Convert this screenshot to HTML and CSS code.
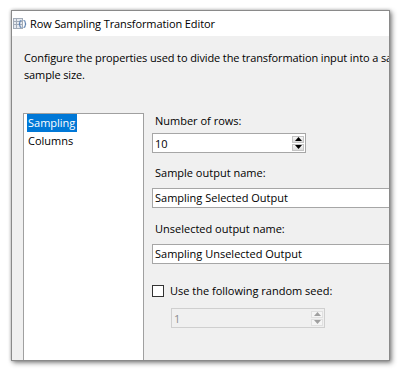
FILE: index.html
```html
<!DOCTYPE html>
<html>
<head>
<meta charset="utf-8">
<link rel="stylesheet" href="styles.css">
</head>
<body>
<div class="window">
  <div class="titlebar">
    <svg class="appicon" width="14" height="13" viewBox="0 0 14 13">
      <rect x="0.5" y="1.5" width="9" height="10" fill="#e6eaf0" stroke="#a3acb8"/>
      <line x1="0.5" y1="4.5" x2="9.5" y2="4.5" stroke="#a3acb8"/>
      <line x1="0.5" y1="7.5" x2="9.5" y2="7.5" stroke="#a3acb8"/>
      <line x1="3.5" y1="1.5" x2="3.5" y2="11.5" stroke="#a3acb8"/>
      <path d="M8.5 3.5 Q6.8 3.5 6.8 5.2 L6.8 6 Q6.8 7 5.8 7 Q6.8 7 6.8 8 L6.8 8.8 Q6.8 10.5 8.5 10.5" fill="none" stroke="#5b7fae" stroke-width="1.1"/>
      <path d="M10.5 3.5 Q12.2 3.5 12.2 5.2 L12.2 6 Q12.2 7 13.2 7 Q12.2 7 12.2 8 L12.2 8.8 Q12.2 10.5 10.5 10.5" fill="none" stroke="#5b7fae" stroke-width="1.1"/>
    </svg>
    <span class="title">Row Sampling Transformation Editor</span>
  </div>
  <div class="content">
    <p class="desc">Configure the properties used to divide the transformation input into a sample based on a<br>sample size.</p>
    <div class="main">
      <div class="listbox">
        <div class="item selected">Sampling</div>
        <div class="item">Columns</div>
      </div>
      <div class="panel">
        <label class="lbl lbl-rows">Number of rows:</label>
        <div class="spin spin-rows">
          <span class="val">10</span>
          <div class="btns">
            <div class="btn"><svg width="7" height="4" viewBox="0 0 7 4"><path d="M3.5 0 L7 4 L0 4 Z" fill="#000"/></svg></div>
            <div class="btn"><svg width="7" height="4" viewBox="0 0 7 4"><path d="M0 0 L7 0 L3.5 4 Z" fill="#000"/></svg></div>
          </div>
        </div>
        <label class="lbl lbl-sample">Sample output name:</label>
        <div class="textbox">Sampling Selected Output</div>
        <label class="lbl lbl-unsel">Unselected output name:</label>
        <div class="textbox">Sampling Unselected Output</div>
        <div class="check">
          <span class="box"></span>
          <span>Use the following random seed:</span>
        </div>
        <div class="spin disabled">
          <span class="val">1</span>
          <div class="btns">
            <div class="btn"><svg width="7" height="4" viewBox="0 0 7 4"><path d="M3.5 0 L7 4 L0 4 Z" fill="#a0a0a0"/></svg></div>
            <div class="btn"><svg width="7" height="4" viewBox="0 0 7 4"><path d="M0 0 L7 0 L3.5 4 Z" fill="#a0a0a0"/></svg></div>
          </div>
        </div>
      </div>
    </div>
  </div>
</div>
</body>
</html>
```
FILE: styles.css
```css
html, body {
  margin: 0;
  padding: 0;
  background: #ffffff;
}
body {
  width: 400px;
  height: 370px;
  overflow: hidden;
  font-family: "Open Sans", "Noto Sans", sans-serif;
  font-size: 11px;
  color: #000;
}
.window {
  margin: 10px 0 0 11px;
  width: 377px;
  height: 349px;
  border: 1px solid #8a8a8a;
  background: #f0f0f0;
  box-shadow: 2px 2px 5px rgba(0, 0, 0, 0.45), 0 0 3px rgba(0, 0, 0, 0.25);
  overflow: hidden;
  display: flex;
  flex-direction: column;
}
.titlebar {
  height: 25px;
  background: #ffffff;
  display: flex;
  align-items: center;
  padding-left: 1px;
  flex: none;
}
.appicon {
  margin-right: 3px;
}
.title {
  white-space: nowrap;
  letter-spacing: -0.1px;
}
.content {
  flex: 1;
  padding: 13px 0 0 11px;
  display: flex;
  flex-direction: column;
  min-height: 0;
}
.desc {
  margin: 0;
  padding-left: 1px;
  line-height: 17px;
  white-space: nowrap;
  letter-spacing: -0.12px;
  height: 34px;
}
.main {
  flex: 1;
  margin-top: 30px;
  display: flex;
  min-height: 0;
}
.listbox {
  width: 116px;
  border: 1px solid #a0a0a0;
  border-bottom: none;
  background: #fff;
  padding: 0 0 0 3px;
  flex: none;
}
.item {
  float: left;
  clear: both;
  padding: 0 2px 0 1px;
  line-height: 18px;
}
.item.selected {
  background: #0078d7;
  color: #fff;
}
.panel {
  margin-left: 8px;
  flex: 1;
  display: flex;
  flex-direction: column;
  align-items: flex-start;
}
.lbl {
  display: block;
  margin: 0 0 7px 3px;
  line-height: 16px;
}
.lbl-rows {
  margin-bottom: 4px;
}
.lbl-sample {
  margin-top: 12px;
}
.lbl-unsel {
  margin-top: 13px;
}
.spin {
  width: 152px;
  height: 18px;
  border: 1px solid #a6a6a6;
  background: #fff;
  display: flex;
  align-items: center;
  justify-content: space-between;
}
.val {
  padding-left: 2px;
}
.btns {
  display: flex;
  flex-direction: column;
  gap: 1px;
  margin-right: 1px;
}
.btn {
  width: 12px;
  height: 7px;
  background: linear-gradient(#f6f6f6, #dcdcdc);
  border: 1px solid #c4c4c4;
  box-sizing: border-box;
  display: flex;
  align-items: center;
  justify-content: center;
}
.textbox {
  width: 300px;
  height: 18px;
  line-height: 18px;
  border: 1px solid #a6a6a6;
  background: #fff;
  padding-left: 2px;
  white-space: nowrap;
}
.check {
  margin-top: 19px;
  display: flex;
  align-items: center;
  gap: 6px;
  line-height: 16px;
}
.box {
  width: 10px;
  height: 10px;
  border: 1px solid #333;
  background: #fff;
}
.spin.disabled {
  margin-top: 9px;
  margin-left: 19px;
  background: #f0f0f0;
  border-color: #cfcfcf;
  color: #8d8d8d;
}
.spin.disabled .btn {
  background: #f5f5f5;
  border-color: #e0e0e0;
}
```
